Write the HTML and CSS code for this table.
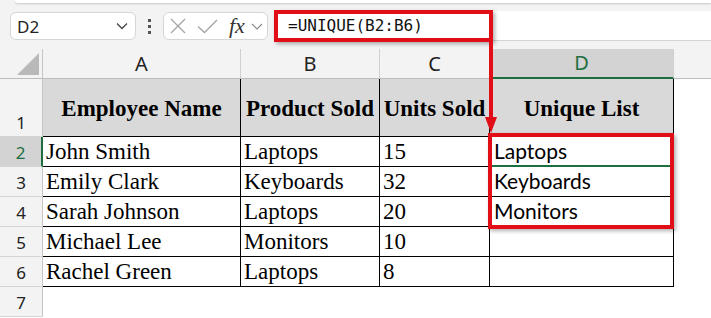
FILE: index.html
```html
<!DOCTYPE html>
<html lang="en">
<head>
    <meta charset="UTF-8">
    <meta name="viewport" content="width=device-width, initial-scale=1.0">
    <title>Unique List</title>
    <link rel="stylesheet" href="styles.css">
</head>
<body>
    <div class="topbar">
        <div class="ribbon-edge"></div>
        <div class="toolbar">
            <div class="name-box">
                <span>D2</span>
                <svg width="12" height="8" viewBox="0 0 12 8"><path d="M1 1.5 L6 6.5 L11 1.5" fill="none" stroke="#444" stroke-width="1.3"/></svg>
            </div>
            <div class="grip"><i></i><i></i><i></i></div>
            <div class="fx-box">
                <svg class="icon-cancel" width="16" height="16" viewBox="0 0 16 16"><path d="M1 1 L15 15 M15 1 L1 15" stroke="#a3a3a3" stroke-width="1.3"/></svg>
                <svg class="icon-enter" width="21" height="15" viewBox="0 0 21 15"><path d="M1 7.5 L7.5 13.5 L20 1" fill="none" stroke="#a3a3a3" stroke-width="1.3"/></svg>
                <span class="fx">fx</span>
                <svg class="icon-more" width="12" height="7" viewBox="0 0 12 7"><path d="M1 1 L6 6 L11 1" fill="none" stroke="#8a8a8a" stroke-width="1.1"/></svg>
            </div>
            <div class="formula-bar"><span>=UNIQUE(B2:B6)</span></div>
        </div>
    </div>

    <div class="sheet">
        <!-- column headers -->
        <div class="corner"><div class="tri"></div></div>
        <div class="col-head">A</div>
        <div class="col-head">B</div>
        <div class="col-head">C</div>
        <div class="col-head sel">D</div>
        <div class="col-head rest"></div>

        <!-- row 1 -->
        <div class="row-head">1</div>
        <div class="cell th">Employee Name</div>
        <div class="cell th">Product Sold</div>
        <div class="cell th">Units Sold</div>
        <div class="cell th">Unique List</div>
        <div class="blank"></div>

        <div class="row-head sel">2</div>
        <div class="cell">John Smith</div>
        <div class="cell">Laptops</div>
        <div class="cell">15</div>
        <div class="cell uniq active">Laptops</div>
        <div class="blank"></div>

        <div class="row-head">3</div>
        <div class="cell">Emily Clark</div>
        <div class="cell">Keyboards</div>
        <div class="cell">32</div>
        <div class="cell uniq">Keyboards</div>
        <div class="blank"></div>

        <div class="row-head">4</div>
        <div class="cell">Sarah Johnson</div>
        <div class="cell">Laptops</div>
        <div class="cell">20</div>
        <div class="cell uniq">Monitors</div>
        <div class="blank"></div>

        <div class="row-head">5</div>
        <div class="cell">Michael Lee</div>
        <div class="cell">Monitors</div>
        <div class="cell">10</div>
        <div class="cell uniq"></div>
        <div class="blank"></div>

        <div class="row-head">6</div>
        <div class="cell">Rachel Green</div>
        <div class="cell">Laptops</div>
        <div class="cell">8</div>
        <div class="cell uniq"></div>
        <div class="blank"></div>

        <div class="row-head">7</div>
        <div class="blank wide"></div>
    </div>

    <!-- red callouts -->
    <div class="callout formula-callout"></div>
    <svg class="arrow" width="14" height="95" viewBox="0 0 14 95">
        <path d="M7 0 V80" stroke="#e10e17" stroke-width="4"/>
        <path d="M1 77 H13 L7 93 Z" fill="#e10e17"/>
    </svg>
    <div class="callout range-callout"></div>
</body>
</html>
```

FILE: styles.css
```css
body {
    margin: 0;
    background-color: #fff;
    font-family: "Noto Sans", sans-serif;
    color: #222;
    position: relative;
    overflow: hidden;
}

/* formula bar area */
.topbar {
    background-color: #f3f3f3;
    height: 49px;
}
.ribbon-edge {
    height: 3px;
    margin-left: 15px;
    background-color: #fff;
    border-bottom-left-radius: 5px;
    box-shadow: 0 1px 2px rgba(0,0,0,0.18);
}
.toolbar {
    display: flex;
    padding: 9px 0 0 10px;
}
.name-box {
    width: 126px;
    height: 28px;
    box-sizing: border-box;
    background-color: #fff;
    border: 1px solid #d6d6d6;
    border-radius: 6px;
    display: flex;
    align-items: center;
    justify-content: space-between;
    padding: 0 7px 0 6px;
    font-size: 17px;
}
.grip {
    width: 27px;
    display: flex;
    flex-direction: column;
    align-items: center;
    justify-content: center;
    gap: 3px;
}
.grip i {
    width: 3px;
    height: 3px;
    background-color: #555;
}
.fx-box {
    width: 105px;
    height: 28px;
    box-sizing: border-box;
    background-color: #fff;
    border: 1px solid #d6d6d6;
    border-radius: 6px;
    display: flex;
    align-items: center;
    padding-left: 6px;
}
.icon-enter {
    margin-left: 11px;
}
.fx {
    margin-left: 11px;
    font-family: "Liberation Serif", serif;
    font-style: italic;
    font-size: 22px;
    color: #333;
    line-height: 1;
}
.icon-more {
    margin-left: 6px;
}
.formula-bar {
    flex: 1;
    margin: -1px 0 0 6px;
    height: 30px;
    box-sizing: border-box;
    background-color: #fff;
    border-bottom: 1px solid #d4d4d4;
    display: flex;
    align-items: center;
    padding-left: 14px;
    font-family: "DejaVu Sans Mono", monospace;
    font-size: 16px;
    color: #111;
}

/* worksheet */
.sheet {
    display: grid;
    grid-template-columns: 43px 198px 139px 110px 184px 1fr;
    grid-template-rows: 30px 58px repeat(6, 30px);
}
.sheet > div {
    box-sizing: border-box;
}
.corner {
    background-color: #f3f3f3;
    border-right: 1px solid #c6c6c6;
    border-bottom: 1px solid #bdbdbd;
    display: flex;
    align-items: flex-end;
    justify-content: flex-end;
    padding: 0 3px 3px 0;
}
.tri {
    width: 22px;
    height: 22px;
    background-color: #b9b9b9;
    clip-path: polygon(100% 0, 100% 100%, 0 100%);
}
.col-head {
    background-color: #f3f3f3;
    border-right: 1px solid #cfcfcf;
    border-bottom: 1px solid #bdbdbd;
    display: flex;
    align-items: flex-end;
    justify-content: center;
    font-size: 20px;
    line-height: 28px;
}
.col-head.sel {
    background-color: #d3d3d3;
    border-bottom: 2px solid #1e6f40;
    color: #1e6f40;
}
.col-head.rest {
    border-right: none;
}
.row-head {
    background-color: #f3f3f3;
    border-right: 1px solid #c6c6c6;
    border-bottom: 1px solid #d4d4d4;
    display: flex;
    align-items: flex-end;
    justify-content: center;
    padding-bottom: 2px;
    font-size: 17px;
}
.row-head.sel {
    background-color: #d3d3d3;
    border-right: 2px solid #1e6f40;
    color: #1e6f40;
}
.cell {
    border-right: 1px solid #000;
    border-bottom: 1px solid #000;
    display: flex;
    align-items: flex-end;
    padding: 0 0 1px 3px;
    font-family: "Liberation Serif", serif;
    font-size: 23px;
    color: #000;
    white-space: nowrap;
}
.cell.th {
    background-color: #d9d9d9;
    font-weight: bold;
    align-items: center;
    justify-content: center;
    padding: 2px 0 0 0;
}
.cell.uniq {
    font-family: Lato, "Liberation Sans", sans-serif;
    font-size: 21px;
    padding: 0 0 3px 4px;
}
.cell.uniq.active {
    border-bottom: 2px solid #1e6f40;
    padding-bottom: 2px;
}
.blank {
    background-color: #fff;
}
.blank.wide {
    grid-column: span 5;
}

/* annotations drawn over the sheet */
.callout {
    position: absolute;
    box-sizing: border-box;
    border: 4px solid #e10e17;
    box-shadow: 2px 2px 4px rgba(0,0,0,0.3);
}
.formula-callout {
    left: 274px;
    top: 10px;
    width: 219px;
    height: 32px;
}
.range-callout {
    left: 488px;
    top: 133px;
    width: 186px;
    height: 96px;
}
.arrow {
    position: absolute;
    left: 484px;
    top: 40px;
}
```
